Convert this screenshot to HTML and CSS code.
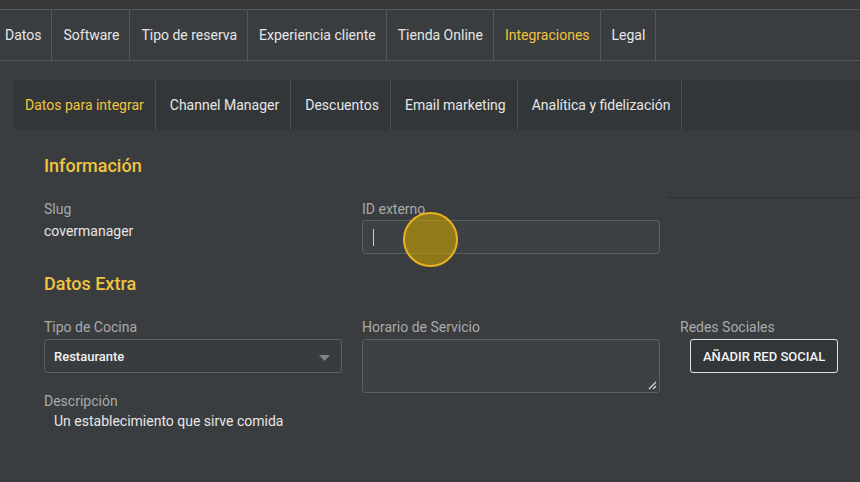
FILE: index.html
```html
<!DOCTYPE html>
<html lang="es">
<head>
<meta charset="utf-8">
<title>Integraciones</title>
<link rel="stylesheet" href="styles.css">
</head>
<body>
<div class="topstrip"></div>
<nav class="tabs">
  <div class="tabs-inner">
    <div class="tab">Datos</div>
    <div class="tab">Software</div>
    <div class="tab">Tipo de reserva</div>
    <div class="tab">Experiencia cliente</div>
    <div class="tab">Tienda Online</div>
    <div class="tab active">Integraciones</div>
    <div class="tab">Legal</div>
  </div>
</nav>
<main class="panel">
  <nav class="subtabs">
    <div class="subtab active">Datos para integrar</div>
    <div class="subtab">Channel Manager</div>
    <div class="subtab">Descuentos</div>
    <div class="subtab">Email marketing</div>
    <div class="subtab">Analítica y fidelización</div>
  </nav>
  <section class="content">
    <h2 class="heading">Información</h2>
    <div class="grid row-info">
      <div class="field">
        <div class="label">Slug</div>
        <div class="value slug">covermanager</div>
      </div>
      <div class="field">
        <div class="label">ID externo</div>
        <div class="input focus"><span class="caret"></span><span class="click"></span></div>
      </div>
      <div class="field">
        <div class="rule"></div>
      </div>
    </div>
    <h2 class="heading extra">Datos Extra</h2>
    <div class="grid row-extra">
      <div class="field">
        <div class="label">Tipo de Cocina</div>
        <div class="input select">
          <span class="select-text">Restaurante</span>
          <svg class="arrow" width="11" height="6" viewBox="0 0 11 6"><path d="M0 0H11L5.5 6Z" fill="#7f8284"/></svg>
        </div>
        <div class="label desc-label">Descripción</div>
        <div class="value desc">Un establecimiento que sirve comida</div>
      </div>
      <div class="field">
        <div class="label">Horario de Servicio</div>
        <div class="input textarea">
          <svg class="grip" width="9" height="9" viewBox="0 0 9 9"><path d="M8 1L1 8M8 5L5 8" stroke="#d8d8d8" stroke-width="1.2"/></svg>
        </div>
      </div>
      <div class="field">
        <div class="label">Redes Sociales</div>
        <button class="btn">AÑADIR RED SOCIAL</button>
      </div>
    </div>
  </section>
</main>
</body>
</html>
```

FILE: styles.css
```css
* { box-sizing: border-box; }
html, body { margin: 0; padding: 0; }
body {
  background: #3a3d3f;
  font-family: Roboto, "Liberation Sans", sans-serif;
  font-size: 14px;
  color: #e4e4e4;
  width: 860px;
  height: 482px;
  overflow: hidden;
}
.topstrip {
  height: 10px;
  background: #37393b;
  border-bottom: 1px solid #56595b;
}
.tabs {
  height: 51px;
  border-bottom: 1px solid #56595b;
  overflow: hidden;
}
.tabs-inner {
  display: flex;
  height: 50px;
  margin-left: -6px;
}
.tab {
  display: flex;
  align-items: center;
  padding: 0 10px 0 11px;
  border-right: 1px solid #56595b;
  color: #e6e6e6;
  white-space: nowrap;
}
.tab.active, .subtab.active { color: #f2c33f; }
.panel {
  margin: 19px 0 0 14px;
}
.subtabs {
  display: flex;
  height: 50px;
  background: #333638;
}
.subtab {
  display: flex;
  align-items: center;
  padding: 0 11px 0 14px;
  border-right: 1px solid #4b4e50;
  color: #e6e6e6;
  white-space: nowrap;
}
.subtab:first-child { padding-left: 11px; }
.content {
  padding: 24px 0 0 30px;
}
.heading {
  margin: 0;
  font-size: 18px;
  line-height: 24px;
  font-weight: 500;
  color: #f2c33f;
}
.heading.extra { margin-top: 18px; }
.grid {
  display: grid;
  grid-template-columns: 298px 298px 1fr;
  column-gap: 20px;
  margin-top: 21px;
}
.field { min-width: 0; }
.label {
  line-height: 20px;
  color: #a8aaac;
}
.value {
  line-height: 20px;
  color: #e6e6e6;
}
.slug { margin-top: 2px; }
.input {
  position: relative;
  height: 34px;
  margin-top: 1px;
  border: 1px solid #5c5f61;
  border-radius: 3px;
  background: #3e4143;
}
.row-info .input { margin-top: 1px; }
.row-extra .input { margin-top: 2px; }
.caret {
  position: absolute;
  left: 10px;
  top: 8px;
  width: 1px;
  height: 17px;
  background: #cfcfcf;
}
.click {
  position: absolute;
  left: 40px;
  top: -9px;
  width: 55px;
  height: 55px;
  border-radius: 50%;
  border: 2px solid #e7b41f;
  background: rgba(200, 160, 0, 0.6);
}
.rule {
  margin: -2px 0 0 -12px;
  border-top: 1px solid #2c2e30;
}
.select {
  display: flex;
  align-items: center;
  justify-content: space-between;
  padding: 0 11px 0 9px;
  background: #393c3e;
}
.select-text {
  font-size: 13px;
  font-weight: 500;
  color: #f2f2f2;
}
.arrow { margin-top: 3px; }
.textarea { height: 54px; }
.grip {
  position: absolute;
  right: 2px;
  bottom: 2px;
}
.desc-label { margin-top: 18px; }
.desc { padding-left: 10px; }
.btn {
  display: block;
  height: 34px;
  margin: 2px 0 0 10px;
  padding: 0 12px;
  border: 1px solid #e0e0e0;
  border-radius: 3px;
  background: #333638;
  color: #f4f4f4;
  font-family: Roboto, "Liberation Sans", sans-serif;
  font-size: 13px;
  font-weight: 500;
  letter-spacing: 0;
}
```
